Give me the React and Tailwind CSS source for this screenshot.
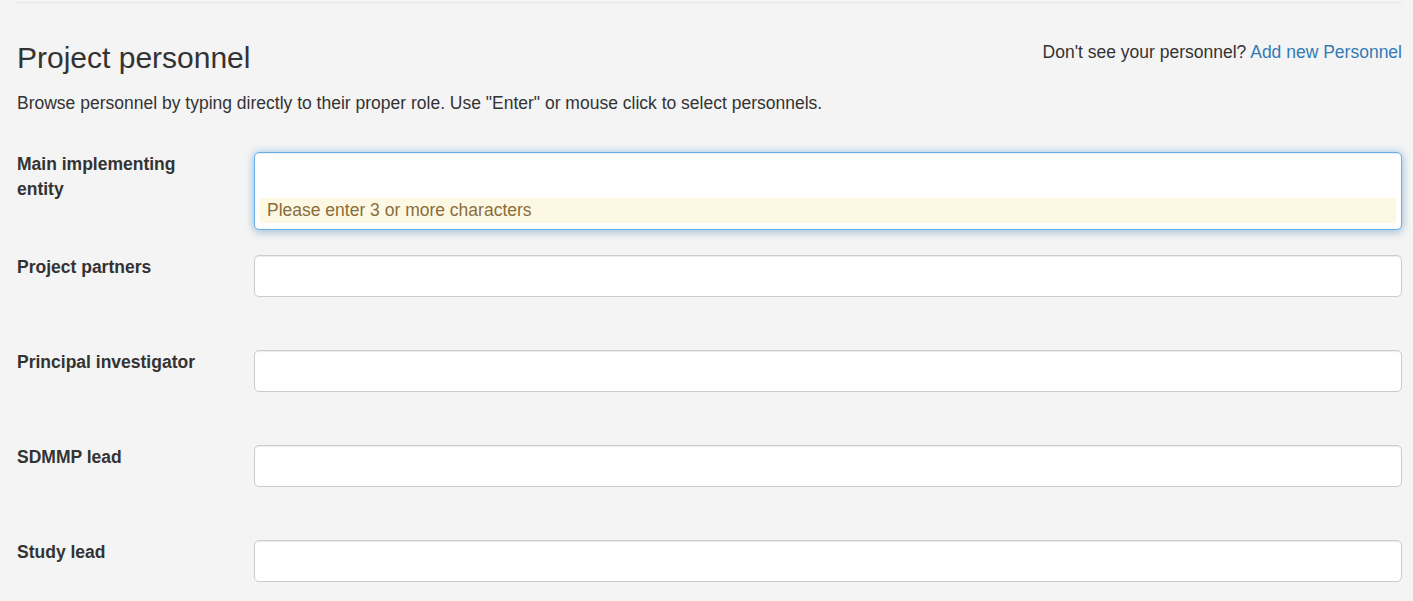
import React from "react";

function Field({ label, children, className = "" }) {
  return (
    <div className={`flex items-start ${className}`}>
      <label className="w-[237px] shrink-0 pr-[40px] font-bold text-[17.5px] leading-[25px] text-[#333]">
        {label}
      </label>
      <div className="flex-1 min-w-0">{children}</div>
    </div>
  );
}

function Input() {
  return (
    <div className="h-[42px] bg-white border border-[#cccccc] rounded-[5px] shadow-[inset_0_1px_1px_rgba(0,0,0,0.075)]" />
  );
}

export default function App() {
  return (
    <div
      className="min-h-[601px] bg-[#f4f4f4] text-[#333] pl-[17px] pr-[11px] pt-[2px] pb-[19px]"
      style={{ fontFamily: '"Liberation Sans", Arial, Helvetica, sans-serif' }}
    >
      <div className="h-px bg-[#e6e6e6]" />
      <div className="flex items-start justify-between mt-[37px]">
        <h2 className="mt-[1px] mb-[1px] text-[30px] leading-[33px] font-normal text-[#333]">
          Project personnel
        </h2>
        <div className="text-[17.5px] leading-[25px] text-[#333]">
          Don't see your personnel?{" "}
          <a className="text-[#337ab7]" href="#">
            Add new Personnel
          </a>
        </div>
      </div>
      <p className="mt-[16px] text-[17.5px] leading-[25px] text-[#333]">
        Browse personnel by typing directly to their proper role. Use "Enter" or mouse click to select personnels.
      </p>

      <Field label="Main implementing entity" className="mt-[36px]">
        <div className="bg-white border border-[#66afe9] rounded-[5px] shadow-[inset_0_1px_1px_rgba(0,0,0,0.075),0_0_8px_rgba(102,175,233,0.6),0_4px_8px_rgba(0,0,0,0.12)]">
          <div className="h-[41px]" />
          <div className="px-[5px] pt-[4px] pb-[6px]">
            <div className="bg-[#fcf8e3] text-[#8a6d3b] text-[17.5px] leading-[25px] px-[7px]">
              Please enter 3 or more characters
            </div>
          </div>
        </div>
      </Field>

      <Field label="Project partners" className="mt-[25px]">
        <Input />
      </Field>
      <Field label="Principal investigator" className="mt-[53px]">
        <Input />
      </Field>
      <Field label="SDMMP lead" className="mt-[53px]">
        <Input />
      </Field>
      <Field label="Study lead" className="mt-[53px]">
        <Input />
      </Field>
    </div>
  );
}
